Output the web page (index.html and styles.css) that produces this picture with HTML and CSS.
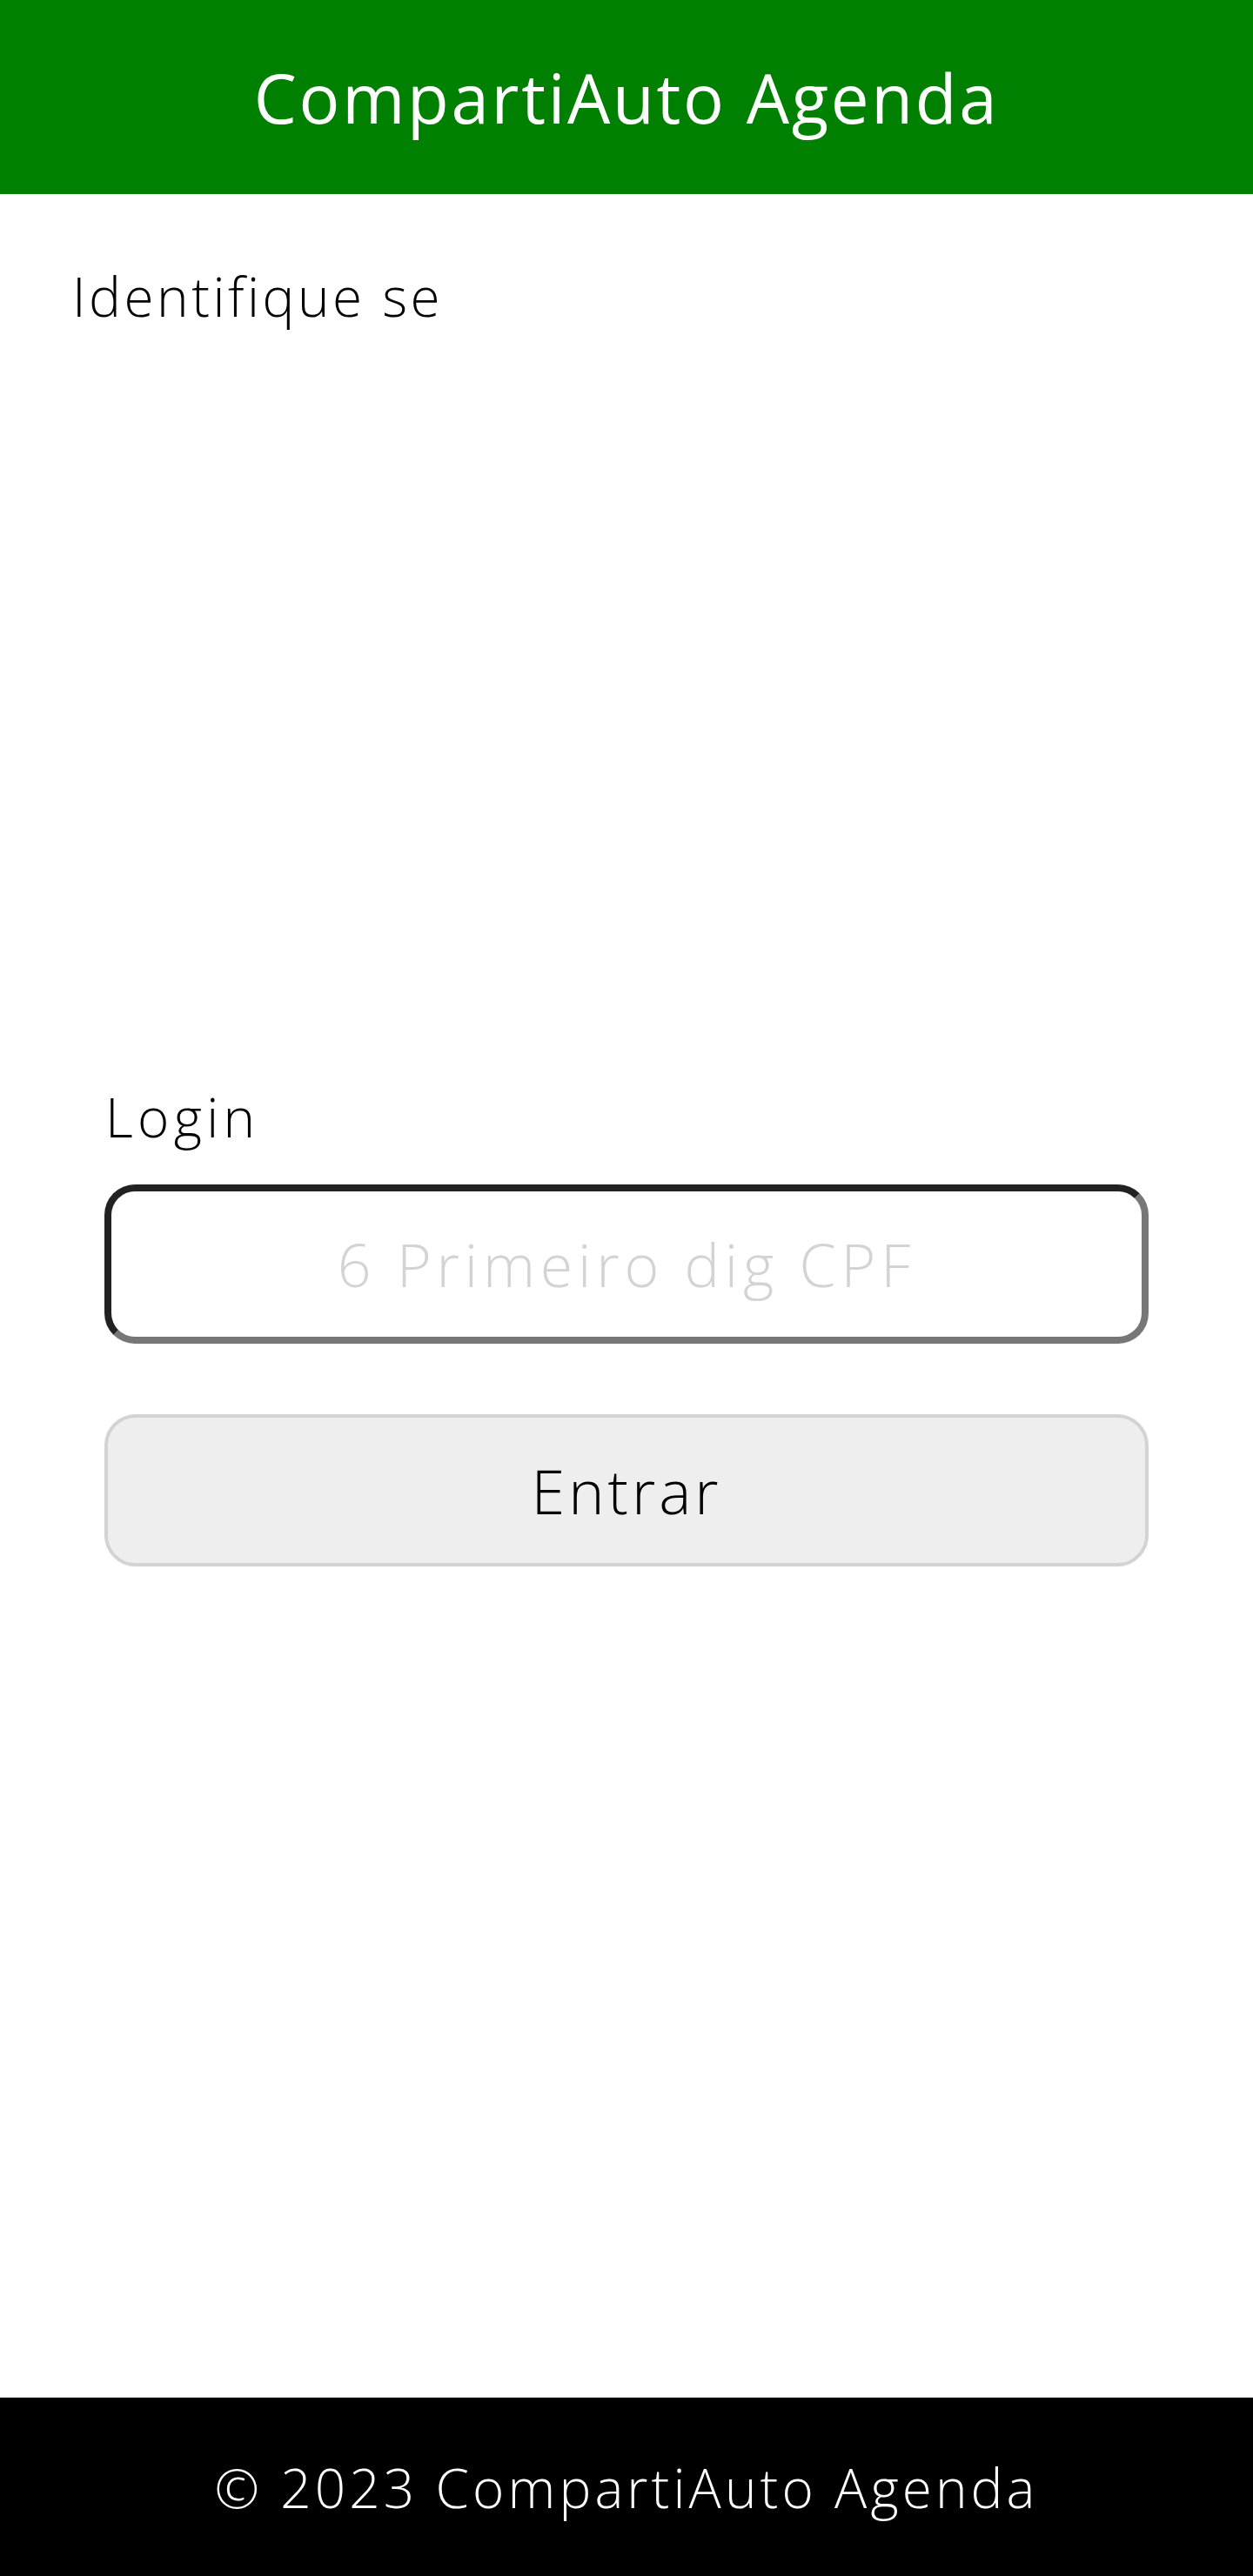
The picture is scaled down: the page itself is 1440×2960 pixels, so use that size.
FILE: index.html
```html
<!DOCTYPE html>
<html lang="pt-BR">
<head>
<meta charset="utf-8">
<title>CompartiAuto Agenda</title>
<link rel="stylesheet" href="styles.css">
</head>
<body>
<header class="top-bar">
  <h1 class="brand">CompartiAuto Agenda</h1>
</header>
<main class="content">
  <h2 class="page-title">Identifique se</h2>
  <form class="login-form">
    <label class="field-label" for="login">Login</label>
    <input class="field-input" id="login" type="text" placeholder="6 Primeiro dig CPF">
    <button class="submit-btn" type="button">Entrar</button>
  </form>
</main>
<footer class="bottom-bar">
  <p class="copyright">© 2023 CompartiAuto Agenda</p>
</footer>
</body>
</html>
```
FILE: styles.css
```css
* { box-sizing: border-box; }
html, body { margin: 0; padding: 0; }
body {
  min-height: 100vh;
  display: flex;
  flex-direction: column;
  font-family: "Open Sans", Inter, "Liberation Sans", sans-serif;
  background: #fff;
  color: #000;
}
.top-bar {
  height: 223px;
  background: #008000;
  display: flex;
  align-items: center;
  justify-content: center;
  flex-shrink: 0;
}
.brand {
  margin: 0;
  color: #fff;
  font-size: 78px;
  font-weight: 400;
  line-height: 1;
  letter-spacing: 2.7px;
}
.content {
  flex: 1;
  display: flex;
  flex-direction: column;
}
.page-title {
  margin: 85px 0 0 83px;
  font-size: 62px;
  font-weight: 300;
  line-height: 64px;
  letter-spacing: 3.5px;
}
.login-form {
  display: flex;
  flex-direction: column;
  margin: 879px 120px 0 120px;
}
.field-label {
  font-size: 62px;
  font-weight: 300;
  line-height: 64px;
  padding-left: 1px;
  letter-spacing: 5.3px;
}
.field-input {
  margin-top: 46px;
  height: 183px;
  width: 100%;
  border: 8px solid;
  border-color: #222 #777 #777 #222;
  border-radius: 35px;
  background: #fff;
  font-family: inherit;
  font-size: 68px;
  font-weight: 300;
  letter-spacing: 5.8px;
  text-align: center;
  color: #000;
  outline: none;
}
.field-input::placeholder { color: #d3d3d3; }
.submit-btn {
  margin-top: 81px;
  height: 175px;
  width: 100%;
  border: 4px solid #d3d3d3;
  border-radius: 36px;
  background: #eee;
  font-family: inherit;
  font-size: 70px;
  font-weight: 300;
  letter-spacing: 4px;
  color: #000;
}
.bottom-bar {
  height: 205px;
  background: #000;
  display: flex;
  align-items: center;
  justify-content: center;
  flex-shrink: 0;
}
.copyright {
  margin: 0;
  color: #fff;
  font-size: 62px;
  font-weight: 300;
  line-height: 1;
  letter-spacing: 4.1px;
}
```
